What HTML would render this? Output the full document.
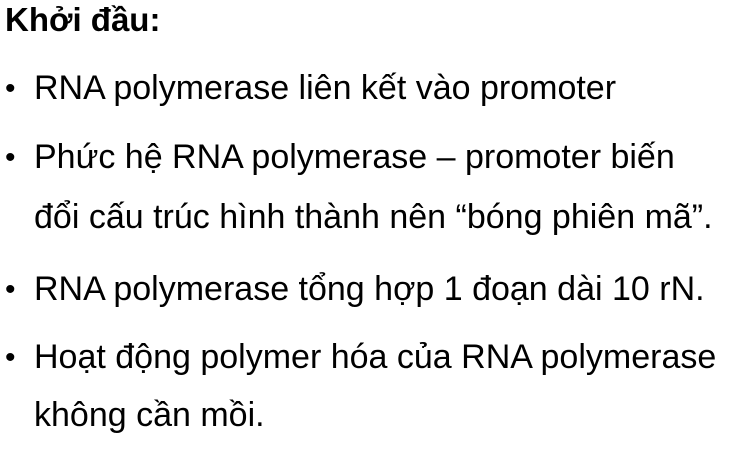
<!DOCTYPE html>
<html><head><meta charset="utf-8"><style>
body{margin:0;width:729px;height:458px;background:#fff;position:relative;overflow:hidden;font-family:"Liberation Sans",Arial,sans-serif;color:#000}
.l{position:absolute;white-space:nowrap;font-size:34px;line-height:36px}
.b{position:absolute;left:5px;font-size:30px;line-height:36px}
</style></head><body>
<div class="l" style="left:5px;top:2px;font-weight:bold;font-size:33px">Khởi đầu:</div>
<div class="b" style="top:71px">•</div><div class="l" style="left:34px;top:70px">RNA polymerase liên kết vào promoter</div>
<div class="b" style="top:140px">•</div><div class="l" style="left:34px;top:139px">Phức hệ RNA polymerase – promoter biến</div>
<div class="l" style="left:34px;top:199px">đổi cấu trúc hình thành nên “bóng phiên mã”.</div>
<div class="b" style="top:272px">•</div><div class="l" style="left:34px;top:271px">RNA polymerase tổng hợp 1 đoạn dài 10 rN.</div>
<div class="b" style="top:340px">•</div><div class="l" style="left:34px;top:339px">Hoạt động polymer hóa của RNA polymerase</div>
<div class="l" style="left:34px;top:397px">không cần mồi.</div>
</body></html>
